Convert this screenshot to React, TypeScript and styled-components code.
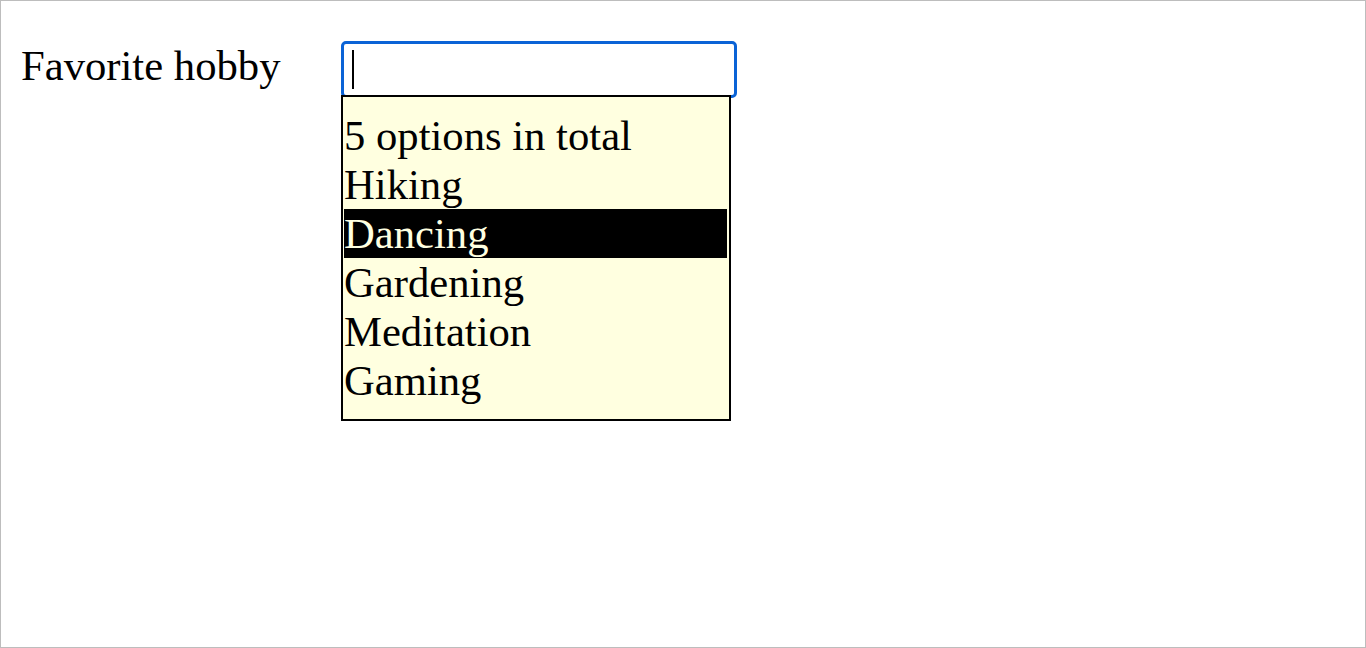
import React from "react";
import styled, { createGlobalStyle } from "styled-components";

const GlobalStyle = createGlobalStyle`
  html, body { margin: 0; padding: 0; background: #ffffff; }
  * { box-sizing: border-box; }
`;

const Frame = styled.div`
  width: 1366px;
  height: 648px;
  border: 1px solid #bdbdbd;
  background: #ffffff;
  font-family: "Liberation Serif", "Times New Roman", serif;
  font-size: 42.67px;
  color: #000;
  padding: 40px 0 0 20px;
`;

const Row = styled.div`
  display: grid;
  grid-template-columns: 320px 396px;
  align-items: start;
`;

const Label = styled.label`
  display: block;
  line-height: normal;
`;

const ComboWrap = styled.div`
  position: relative;
  width: 396px;
`;

const Field = styled.div`
  height: 57px;
  border: 3px solid #0a63d6;
  border-radius: 5px;
  background: #ffffff;
  padding: 6px 0 0 8px;
`;

const Caret = styled.span`
  display: block;
  width: 2px;
  height: 39px;
  background: #000;
`;

const ListBox = styled.ul`
  position: absolute;
  left: 0;
  top: 54px;
  width: 390px;
  margin: 0;
  list-style: none;
  border: 2px solid #000;
  background: #ffffe0;
  padding: 14px 2px 14px 1px;
`;

const Option = styled.li<{ $active?: boolean }>`
  line-height: normal;
  white-space: nowrap;
  background: ${(p) => (p.$active ? "#000" : "transparent")};
  color: ${(p) => (p.$active ? "#ffffe0" : "#000")};
`;

const options = ["Hiking", "Dancing", "Gardening", "Meditation", "Gaming"];

export default function App() {
  return (
    <>
      <GlobalStyle />
      <Frame>
        <Row>
          <Label>Favorite hobby</Label>
          <ComboWrap>
            <Field>
              <Caret />
            </Field>
            <ListBox role="listbox">
              <Option>5 options in total</Option>
              {options.map((o) => (
                <Option key={o} $active={o === "Dancing"}>
                  {o}
                </Option>
              ))}
            </ListBox>
          </ComboWrap>
        </Row>
      </Frame>
    </>
  );
}
